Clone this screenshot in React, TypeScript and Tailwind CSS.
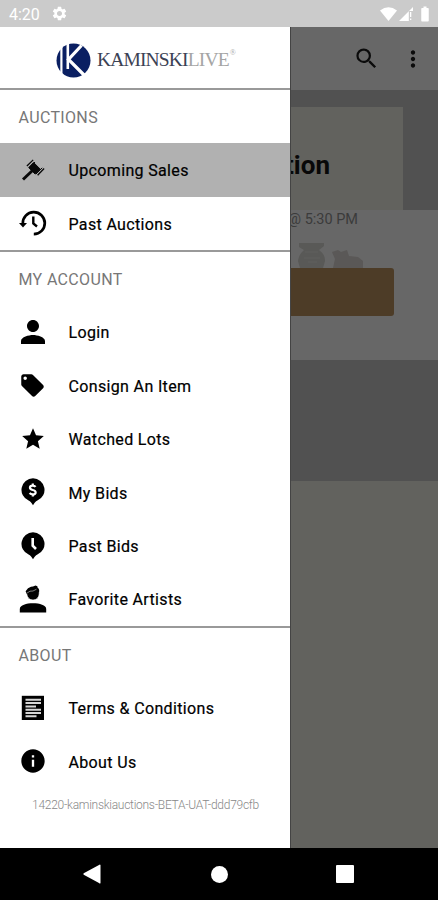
import type { ReactNode } from "react";
import {
  MdBatteryFull,
  MdInfo,
  MdLocalOffer,
  MdMoreVert,
  MdPerson,
  MdSearch,
  MdSettings,
  MdStar,
} from "react-icons/md";

function StatusBar() {
  return (
    <div className="flex h-[27px] shrink-0 items-center bg-[#cbcbcb] pr-[4px] pl-[9px] text-white">
      <span className="w-[42px] pt-[2px] text-[16px] leading-[25px]">4:20</span>
      <MdSettings className="size-[17px]" />
      <svg className="ml-auto" width="17" height="14" viewBox="0 0 17 14" fill="currentColor">
        <path d="M0 3.4Q8.5-2.7 17 3.4L8.5 14Z" />
      </svg>
      <svg className="ml-[2px]" width="14" height="14" viewBox="0 0 14 14" fill="currentColor">
        <path d="M14 0V4H9.8V14H0Z" />
        <path d="M11 5h1.3v5H11zM11 11.5h1.3V13H11z" />
      </svg>
      <MdBatteryFull className="ml-[3px] h-[18px] w-[18px]" />
    </div>
  );
}

function Logo() {
  return (
    <div className="flex h-[61px] shrink-0 items-center pt-[5px] pl-[56px]">
      <svg width="35" height="35" viewBox="0 0 35 35">
        <circle cx="17.5" cy="17.5" r="17" fill="#0a1f62" />
        <path d="M5.4 3V32" stroke="#fff" strokeWidth="2.2" />
        <path d="M11.8 1V26" stroke="#fff" strokeWidth="2.6" />
        <path d="M25.5 2.5 12.5 16.5 28 32" fill="none" stroke="#fff" strokeWidth="3.2" />
      </svg>
      <span className="ml-[6px] flex font-['Liberation_Serif',serif] text-[19.5px] leading-none tracking-[-0.85px] whitespace-nowrap">
        <span className="text-[#3b4254]">KAMINSKI</span>
        <span className="text-[#a5a5a5]">LIVE</span>
        <span className="-mt-[1px] ml-[1px] text-[8px] text-[#aaa]">®</span>
      </span>
    </div>
  );
}

function GavelIcon() {
  return (
    <svg width="26" height="26" viewBox="0 0 26 26" fill="none" stroke="#080808">
      <path d="M3 22.5 13 13" strokeWidth="3" />
      <path d="m13.6 5.5 6.4 6.4-5 5-6.3-6.3Z" fill="#080808" strokeWidth="1" />
      <path d="m6.9 9 6.3-6.1" strokeWidth="1.3" />
      <path d="m17.6 18.3 6.5-6.8" strokeWidth="1.3" />
      <path d="m9 11 6-6M15.7 17.3l6.5-6.5" strokeWidth="1" />
    </svg>
  );
}

function HistoryIcon() {
  return (
    <svg width="28" height="28" viewBox="0 0 28 28" fill="none" stroke="#000">
      <path d="M3.8 14.6A11 11 0 1 1 14.8 25.2" strokeWidth="2.7" />
      <path d="M0 14H8L4 18.5Z" fill="#000" stroke="none" />
      <path d="M14.3 7.5V14.5L18 17.5" strokeWidth="2.4" />
    </svg>
  );
}

function Pin({ children }: { children: ReactNode }) {
  return (
    <svg width="26" height="28" viewBox="0 0 26 28">
      <path d="M13 .3A11.6 11.6 0 0 0 8.6 22.6C10.5 23.4 11.3 25 13 27.3C14.7 25 15.5 23.4 17.4 22.6A11.6 11.6 0 0 0 13 .3Z" />
      {children}
    </svg>
  );
}

function MyBidsIcon() {
  return (
    <Pin>
      <path
        d="M15.6 8.9C14.9 8 14 7.6 12.7 7.6C9.1 7.6 9 11.4 12.7 12C16.6 12.6 16.6 16.4 12.9 16.4C11.5 16.4 10.4 16 9.6 15.1M12.8 5.4V8M12.8 16V18.6"
        fill="none"
        stroke="#fff"
        strokeWidth="2.2"
      />
    </Pin>
  );
}

function PastBidsIcon() {
  return (
    <Pin>
      <path d="M12.7 6V13.6L16 17" fill="none" stroke="#fff" strokeWidth="2.6" />
    </Pin>
  );
}

function ArtistIcon() {
  return (
    <svg width="28" height="28" viewBox="0 0 28 28">
      <path d="M.8 27.5V24C.8 16.4 27.2 16.4 27.2 24V27.5Z" />
      <circle cx="14" cy="8.8" r="6.2" stroke="#fff" strokeWidth=".6" />
      <path d="M6.6 6.2 9 3.2 12 1.8 14 1.6 16.5.4 18.4 1.2 18.5 2.6C20.2 3.8 20.6 5.5 20 7.5L8 9.2Z" />
      <path d="M7.8 8.2 11 6.2 14 6 17.5 4.2" fill="none" stroke="#999" strokeWidth=".8" />
    </svg>
  );
}

function TermsIcon() {
  return (
    <svg width="24" height="26" viewBox="0 0 24 26">
      <path d="M.8.8H23V25H.8Z" />
      <path
        d="M4.5 4.8H20M4.5 8.1H20M4.5 11.4H15M4.5 14.7H20M4.5 18H20M4.5 21.2H15.5"
        stroke="#d7d7d7"
        strokeWidth="2"
      />
    </svg>
  );
}

function SectionTitle({ children }: { children: ReactNode }) {
  return (
    <h2 className="flex h-[53.4px] shrink-0 items-center pt-[3px] pl-[18.5px] text-[16px] font-normal tracking-[0.35px] text-[#777]">
      {children}
    </h2>
  );
}

function Item({ icon, label, active = false }: { icon: ReactNode; label: string; active?: boolean }) {
  return (
    <div
      className={`flex h-[53.4px] shrink-0 items-center pl-[18px] ${active ? "bg-[#b1b1b1]" : ""}`}
    >
      <span className="flex w-[29px] shrink-0 justify-center">{icon}</span>
      <span className="ml-[21.5px] pt-[2.3px] text-[16px] tracking-[0.35px] text-black [-webkit-text-stroke:0.2px_#000]">
        {label}
      </span>
    </div>
  );
}

function Divider() {
  return <div className="h-[2px] shrink-0 bg-[#999]" />;
}

function Drawer() {
  return (
    <nav className="absolute inset-y-0 left-0 flex w-[291px] flex-col border-r border-[#444] bg-white">
      <Logo />
      <Divider />
      <SectionTitle>AUCTIONS</SectionTitle>
      <Item active icon={<GavelIcon />} label="Upcoming Sales" />
      <Item icon={<HistoryIcon />} label="Past Auctions" />
      <Divider />
      <SectionTitle>MY ACCOUNT</SectionTitle>
      <Item icon={<MdPerson className="size-[36px] shrink-0" />} label="Login" />
      <Item icon={<MdLocalOffer className="size-[27px]" />} label="Consign An Item" />
      <Item icon={<MdStar className="size-[26px]" />} label="Watched Lots" />
      <Item icon={<MyBidsIcon />} label="My Bids" />
      <Item icon={<PastBidsIcon />} label="Past Bids" />
      <Item icon={<ArtistIcon />} label="Favorite Artists" />
      <Divider />
      <SectionTitle>ABOUT</SectionTitle>
      <Item icon={<TermsIcon />} label="Terms & Conditions" />
      <Item icon={<MdInfo className="size-[28px]" />} label="About Us" />
      <p className="mt-[9px] pl-[32px] text-[12px] leading-[16px] font-light tracking-[-0.28px] whitespace-nowrap text-[#888]">
        14220-kaminskiauctions-BETA-UAT-ddd79cfb
      </p>
    </nav>
  );
}

function AuctionPage() {
  return (
    <main className="flex flex-1 flex-col bg-[#62625e]">
      <header className="flex h-[63px] shrink-0 items-center justify-end bg-[#676767] text-[#0b0b0b]">
        <MdSearch className="size-[27px]" />
        <MdMoreVert className="mr-[12px] ml-[20px] size-[26px]" />
      </header>
      <section className="h-[120px] shrink-0 bg-[#515151] pt-[17px] pr-[35px]">
        <div className="flex h-full items-start justify-end bg-[#62625e] pt-[40px] pr-[73px]">
          <h1 className="text-[26px] leading-[36px] font-bold text-[#080808]">Auction</h1>
        </div>
      </section>
      <section className="flex h-[150px] shrink-0 flex-col bg-[#676767]">
        <p className="pt-[1px] pr-[80px] text-right text-[14.5px] leading-[17px] text-[#3b3b3b]">@ 5:30 PM</p>
        <svg className="mt-[14px] ml-[298px] shrink-0" width="66" height="26" viewBox="0 0 66 26">
          <path
            d="M1 1H26V4L21 8C25 11 27 14 27 19L25 26H2L0 19C1 13 3 11 6 8L1 5Z"
            fill="#595957"
          />
          <path d="M7 10H20M6 16H22M10 20H19" stroke="#5e5e5c" strokeWidth="1.5" />
          <path d="M34 10 40 8 43 10 49 8 51 14 60 15 65 19V26H35L37 17Z" fill="#5a5857" />
        </svg>
        <div className="mr-[44px] h-[48px] shrink-0 rounded-[3px] bg-[#4d3c27]" />
      </section>
      <section className="h-[121px] shrink-0 bg-[#515151]" />
    </main>
  );
}

function NavigationBar() {
  return (
    <footer className="flex h-[52px] shrink-0 items-center bg-black pl-[83px] text-white">
      <svg width="18" height="20" viewBox="0 0 18 20" fill="currentColor">
        <path d="M17.5 1V19Q17 20 16 19L.7 10.8Q0 10 .7 9.2L16 1Q17 0 17.5 1Z" />
      </svg>
      <span className="ml-[110px] size-[17px] rounded-full bg-white" />
      <span className="ml-[108px] size-[18px] rounded-[1px] bg-white" />
    </footer>
  );
}

export default function App() {
  return (
    <div className="flex h-[900px] w-[438px] flex-col overflow-hidden font-['Roboto',sans-serif]">
      <StatusBar />
      <div className="relative flex min-h-0 flex-1 flex-col">
        <AuctionPage />
        <Drawer />
      </div>
      <NavigationBar />
    </div>
  );
}
